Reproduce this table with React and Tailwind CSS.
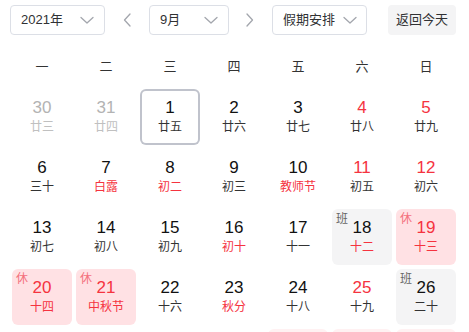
import React from "react";

const RED = "text-[#f5333f]";

const rows = [
  [
    { d: 30, l: "廿三", dim: true },
    { d: 31, l: "廿四", dim: true },
    { d: 1, l: "廿五", today: true },
    { d: 2, l: "廿六" },
    { d: 3, l: "廿七" },
    { d: 4, l: "廿八", rn: true },
    { d: 5, l: "廿九", rn: true },
  ],
  [
    { d: 6, l: "三十" },
    { d: 7, l: "白露", rl: true },
    { d: 8, l: "初二", rl: true },
    { d: 9, l: "初三" },
    { d: 10, l: "教师节", rl: true },
    { d: 11, l: "初五", rn: true },
    { d: 12, l: "初六", rn: true },
  ],
  [
    { d: 13, l: "初七" },
    { d: 14, l: "初八" },
    { d: 15, l: "初九" },
    { d: 16, l: "初十", rl: true },
    { d: 17, l: "十一" },
    { d: 18, l: "十二", rl: true, work: true },
    { d: 19, l: "十三", rn: true, rl: true, rest: true },
  ],
  [
    { d: 20, l: "十四", rn: true, rl: true, rest: true },
    { d: 21, l: "中秋节", rn: true, rl: true, rest: true },
    { d: 22, l: "十六" },
    { d: 23, l: "秋分", rl: true },
    { d: 24, l: "十八" },
    { d: 25, l: "十九", rn: true },
    { d: 26, l: "二十", work: true },
  ],
  [
    { d: 27, l: "廿一" },
    { d: 28, l: "廿二" },
    { d: 29, l: "廿三" },
    { d: 30, l: "廿四" },
    { d: 1, l: "国庆节", dim: true, rest: true, dimRest: true },
    { d: 2, l: "廿六", dim: true, rest: true, dimRest: true },
    { d: 3, l: "廿七", dim: true, rest: true, dimRest: true },
  ],
];

function Chevron({ dir = "down", className = "" }) {
  const paths = {
    down: "M1 1.5 L7 7 L13 1.5",
    left: "M7 1 L1.5 7 L7 13",
    right: "M1 1 L6.5 7 L1 13",
  };
  const size = dir === "down" ? { w: 14, h: 9 } : { w: 9, h: 14 };
  return (
    <svg
      width={size.w}
      height={size.h}
      viewBox={`0 0 ${size.w} ${size.h}`}
      className={className}
      fill="none"
      stroke="#a3a6ad"
      strokeWidth="1.3"
      strokeLinecap="round"
      strokeLinejoin="round"
    >
      <path d={paths[dir]} />
    </svg>
  );
}

function Cell({ c }) {
  let bg = "";
  if (c.rest) bg = c.dimRest ? "bg-[#fff1f2]" : "bg-[#ffe1e4]";
  else if (c.work) bg = "bg-[#f4f4f5]";
  const numColor = c.dim
    ? "text-[#b3b3b3]"
    : c.rn
    ? RED
    : "text-[#111111]";
  const lunColor = c.dim
    ? "text-[#c0c0c0]"
    : c.rl
    ? RED
    : "text-[#333333]";
  return (
    <div
      className={`relative h-[56px] w-[60px] rounded-[6px] ${bg} ${
        c.today ? "shadow-[inset_0_0_0_2px_#c0c3cc]" : ""
      } flex flex-col items-center pt-[8px]`}
    >
      {c.rest && (
        <span className="absolute left-[4px] top-[2px] text-[12px] leading-[16px] text-[#f4707c]">
          休
        </span>
      )}
      {c.work && (
        <span className="absolute left-[4px] top-[2px] text-[12px] leading-[16px] text-[#666666]">
          班
        </span>
      )}
      <div className={`text-[17px] leading-[21px] ${numColor}`}>{c.d}</div>
      <div className={`mt-[1px] text-[12px] leading-[16px] ${lunColor}`}>{c.l}</div>
    </div>
  );
}

export default function App() {
  const weekdays = ["一", "二", "三", "四", "五", "六", "日"];
  return (
    <div
      className="w-[469px] h-[332px] overflow-hidden bg-white"
      style={{ fontFamily: '"Liberation Sans", "Noto Sans CJK SC", sans-serif' }}
    >
      <div className="flex items-center pt-[5px] pl-[10px] text-[13px] text-[#303133]">
        <div className="flex h-[30px] w-[95px] items-center justify-between rounded-[4px] border border-[#dcdfe6] pl-[10px] pr-[10px]">
          <span>2021年</span>
          <Chevron dir="down" />
        </div>
        <div className="flex h-[30px] w-[44px] items-center justify-center">
          <Chevron dir="left" />
        </div>
        <div className="flex h-[30px] w-[80px] items-center justify-between rounded-[4px] border border-[#dcdfe6] pl-[10px] pr-[10px]">
          <span>9月</span>
          <Chevron dir="down" />
        </div>
        <div className="flex h-[30px] w-[43px] items-center justify-center">
          <Chevron dir="right" />
        </div>
        <div className="flex h-[30px] w-[95px] items-center justify-between rounded-[4px] border border-[#dcdfe6] pl-[10px] pr-[9px]">
          <span>假期安排</span>
          <Chevron dir="down" />
        </div>
        <div className="ml-[21px] flex h-[30px] w-[68px] items-center justify-center rounded-[4px] bg-[#f4f4f5]">
          返回今天
        </div>
      </div>

      <div className="mt-[17px] grid h-[30px] grid-cols-[repeat(7,60px)] gap-x-[4px] pl-[12px] text-[13px] text-[#333333]">
        {weekdays.map((w) => (
          <div key={w} className="flex items-center justify-center">
            {w}
          </div>
        ))}
      </div>

      <div className="mt-[7px] grid grid-cols-[repeat(7,60px)] gap-x-[4px] gap-y-[4px] pl-[12px]">
        {rows.flat().map((c, i) => (
          <Cell key={i} c={c} />
        ))}
      </div>
    </div>
  );
}
